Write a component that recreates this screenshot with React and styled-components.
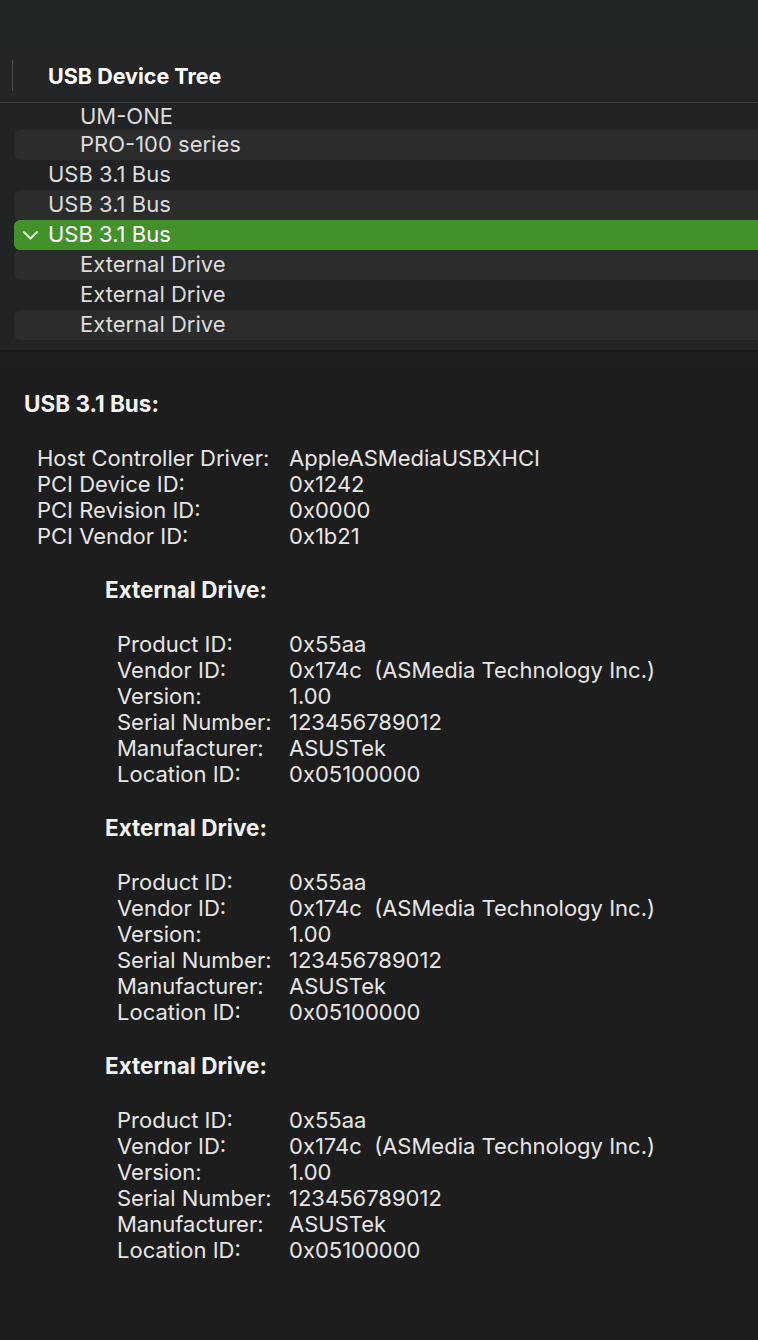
import React from 'react';
import styled, { createGlobalStyle } from 'styled-components';

const GlobalStyle = createGlobalStyle`
    html, body {
        margin: 0;
        padding: 0;
        background: #1e1e1e;
    }
    body {
        font-family: Inter, "Noto Sans", "Liberation Sans", sans-serif;
        -webkit-font-smoothing: antialiased;
    }
`;

// first row is scrolled partly under the column header
const treeRows = [
    { label: 'UM-ONE', level: 1, partial: true },
    { label: 'PRO-100 series', level: 1 },
    { label: 'USB 3.1 Bus', level: 0 },
    { label: 'USB 3.1 Bus', level: 0 },
    { label: 'USB 3.1 Bus', level: 0, selected: true, open: true },
    { label: 'External Drive', level: 1 },
    { label: 'External Drive', level: 1 },
    { label: 'External Drive', level: 1 }
];

const busInfo = [
    ['Host Controller Driver:', 'AppleASMediaUSBXHCI'],
    ['PCI Device ID:', '0x1242'],
    ['PCI Revision ID:', '0x0000'],
    ['PCI Vendor ID:', '0x1b21']
];

const driveInfo = [
    ['Product ID:', '0x55aa'],
    ['Vendor ID:', '0x174c\u00a0\u00a0(ASMedia Technology Inc.)'],
    ['Version:', '1.00'],
    ['Serial Number:', '123456789012'],
    ['Manufacturer:', 'ASUSTek'],
    ['Location ID:', '0x05100000']
];

const Window = styled.div`
    width: 758px;
    height: 1340px;
    display: flex;
    flex-direction: column;
    overflow: hidden;
    background: #1e1e1e;
`;

const TopBar = styled.div`
    height: 48px;
    flex-shrink: 0;
    background: #222526;
`;

const TreePane = styled.div`
    height: 302px;
    flex-shrink: 0;
    display: flex;
    flex-direction: column;
    background: #212324;
`;

const ColumnHeader = styled.div`
    height: 54px;
    flex-shrink: 0;
    display: flex;
    align-items: center;
    padding-left: 12px;
    background: #232526;
    border-bottom: 1px solid #3d3e3e;
`;

const HeaderDivider = styled.div`
    width: 1px;
    height: 31px;
    background: #4a4b4b;
`;

const HeaderTitle = styled.div`
    margin-left: 35px;
    padding-top: 2px;
    font-size: 21.5px;
    font-weight: 700;
    color: #ffffff;
`;

const RowList = styled.div`
    flex: 1;
    overflow: hidden;
`;

const Row = styled.div`
    height: ${(p) => (p.$partial ? 27 : 30)}px;
    margin-left: 14px;
    display: flex;
    align-items: center;
    border-radius: 6px 0 0 6px;
    background: ${(p) => (p.$selected ? '#42912b' : p.$striped ? '#2b2c2c' : 'transparent')};
    color: ${(p) => (p.$selected ? '#ffffff' : '#dcdcdc')};
`;

const ChevronSlot = styled.div`
    width: 34px;
    display: flex;
    align-items: center;
    justify-content: center;
    padding-right: 2px;
    box-sizing: border-box;
`;

const RowLabel = styled.span`
    margin-left: ${(p) => p.$level * 32}px;
    padding-bottom: 2px;
    font-size: 22px;
    line-height: 20px;
    white-space: nowrap;
`;

const SplitBar = styled.div`
    height: 16px;
    flex-shrink: 0;
    background: #1f1f1f;
    border-top: 2px solid #171717;
`;

const DetailPane = styled.div`
    flex: 1;
    padding: 23px 0 0 24px;
    background: #1d1d1d;
    color: #e6e6e6;
`;

const Section = styled.div`
    margin-left: ${(p) => p.$indent || 0}px;
`;

const SectionTitle = styled.div`
    font-size: 22.5px;
    line-height: 26px;
    font-weight: 700;
    color: #f2f2f2;
    margin-bottom: 28px;
`;

const InfoGrid = styled.div`
    display: grid;
    grid-template-columns: ${(p) => p.$labelWidth}px auto;
    margin-left: ${(p) => p.$offset}px;
    margin-bottom: 28px;
    font-size: 22px;
    line-height: 26px;
    white-space: nowrap;
`;

const Chevron = () => (
    <svg width="17" height="11" viewBox="0 0 17 11">
        <path
            d="M2 2.2 L8.5 8.6 L15 2.2"
            fill="none"
            stroke="#e8f0e4"
            strokeWidth="2.1"
            strokeLinecap="round"
            strokeLinejoin="round"
        />
    </svg>
);

const Info = ({ rows, labelWidth, offset }) => (
    <InfoGrid $labelWidth={labelWidth} $offset={offset}>
        {rows.map(([k, v], i) => (
            <React.Fragment key={i}>
                <span>{k}</span>
                <span>{v}</span>
            </React.Fragment>
        ))}
    </InfoGrid>
);

export default function App() {
    return (
        <Window>
            <GlobalStyle />
            <TopBar />
            <TreePane>
                <ColumnHeader>
                    <HeaderDivider />
                    <HeaderTitle>USB Device Tree</HeaderTitle>
                </ColumnHeader>
                <RowList>
                    {treeRows.map((r, i) => (
                        <Row
                            key={i}
                            $partial={r.partial}
                            $striped={i % 2 === 1}
                            $selected={r.selected}
                        >
                            <ChevronSlot>{r.open && <Chevron />}</ChevronSlot>
                            <RowLabel $level={r.level}>{r.label}</RowLabel>
                        </Row>
                    ))}
                </RowList>
            </TreePane>
            <SplitBar />
            <DetailPane>
                <Section>
                    <SectionTitle>USB 3.1 Bus:</SectionTitle>
                    <Info rows={busInfo} labelWidth={252} offset={13} />
                </Section>
                {[0, 1, 2].map((n) => (
                    <Section key={n} $indent={81}>
                        <SectionTitle>External Drive:</SectionTitle>
                        <Info rows={driveInfo} labelWidth={172} offset={12} />
                    </Section>
                ))}
            </DetailPane>
        </Window>
    );
}
